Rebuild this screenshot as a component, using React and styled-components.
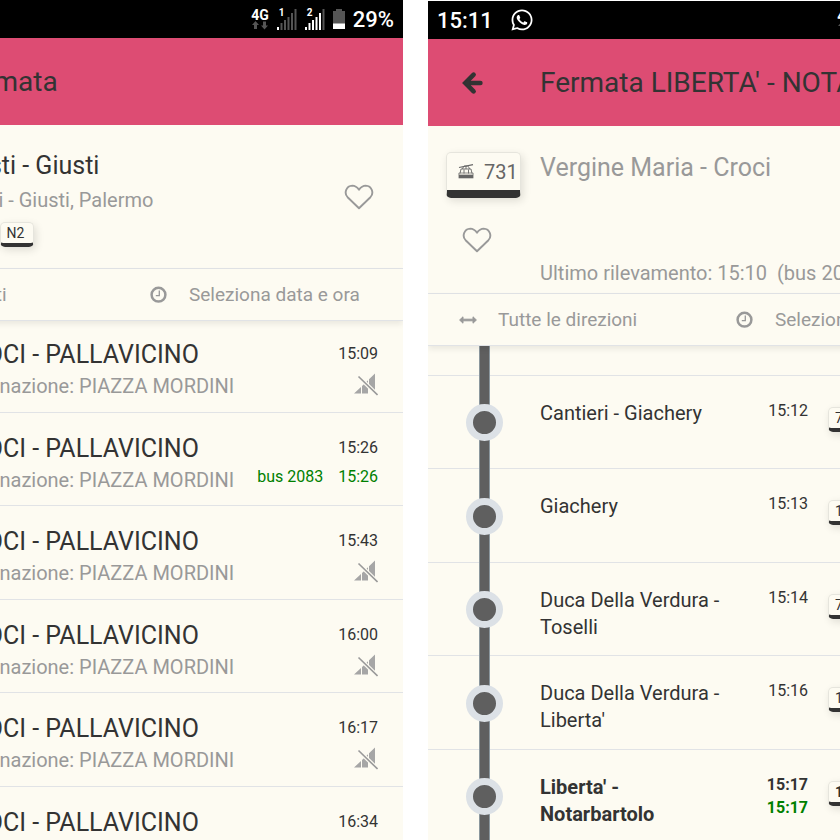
import React from 'react'
import styled, { createGlobalStyle } from 'styled-components'
import { FaWhatsapp } from 'react-icons/fa'

const Palette = {
  pink: '#dd4c73',
  cream: '#fdfbf2',
  dark: '#333333',
  grey: '#999999',
  line: '#e1e3e6',
  rail: '#5f5f5f',
  ring: '#dce1e6',
  green: '#008000',
}

const GlobalStyle = createGlobalStyle`
  * {
    box-sizing: border-box;
  }
  body {
    margin: 0;
    background: #ffffff;
    color: ${Palette.dark};
    font-family: Roboto, "Liberation Sans", sans-serif;
  }
  h1, h2, p, ul {
    margin: 0;
    padding: 0;
    font-weight: 400;
  }
  ul {
    list-style: none;
  }
  button {
    padding: 0;
    border: 0;
    background: none;
    font: inherit;
    color: inherit;
    cursor: pointer;
  }
  svg {
    display: block;
    flex: none;
  }
`

const Page = styled.main`
  display: grid;
  grid-template-columns: minmax(0, 403fr) minmax(0, 412fr);
  gap: 25px;
  height: 100vh;
  overflow: hidden;
`

// each phone is wider than its frame, side picks the edge that stays in view
const Frame = styled.section`
  display: flex;
  justify-content: ${props => props.$side === 'end' ? 'flex-end' : 'flex-start'};
  padding-top: ${props => props.$side === 'end' ? '0' : '1px'};
  overflow: hidden;
`

const Phone = styled.div`
  flex: none;
  width: 561px;
  background: ${Palette.cream};
`

const StatusBar = styled.div`
  display: flex;
  align-items: center;
  justify-content: space-between;
  height: 38px;
  padding: 0 9px;
  background: #000000;
  color: #ffffff;
  font-size: 22px;
  font-weight: 500;
`

const StatusGroup = styled.div`
  display: flex;
  align-items: center;
  gap: ${props => props.$gap};
`

const Network = styled.span`
  display: flex;
  flex-direction: column;
  align-items: center;
  font-size: 14px;
  line-height: 12px;
  font-weight: 700;
`

const Sim = styled.span`
  position: relative;
`

const SimNumber = styled.span`
  position: absolute;
  top: 0;
  left: 2px;
  font-size: 10px;
  line-height: 10px;
  font-weight: 700;
`

const AppBar = styled.header`
  display: flex;
  align-items: center;
  height: 87px;
  background: ${Palette.pink};
`

const BackButton = styled.button`
  flex: none;
  width: 112px;
  padding-left: 33px;
`

const Title = styled.h1`
  font-size: 28px;
  line-height: 32px;
  white-space: nowrap;
`

const StopInfo = styled.div`
  display: flex;
  align-items: center;
  justify-content: space-between;
  height: 144px;
  padding: 0 29px 0 110px;
  border-bottom: 1px solid ${Palette.line};
`

const StopText = styled.div`
  display: flex;
  flex-direction: column;
  gap: 4px;
  padding-top: 4px;
`

const LineInfo = styled.div`
  display: grid;
  grid-template-columns: 94px 1fr;
  column-gap: 18px;
  height: 168px;
  padding-top: 26px;
  border-bottom: 1px solid ${Palette.line};
`

const SideColumn = styled.div`
  display: flex;
  flex-direction: column;
  align-items: flex-start;
  gap: 29px;
  padding-left: 18px;
`

const LineText = styled.div`
  display: flex;
  flex-direction: column;
  justify-content: space-between;
  padding-bottom: 6px;
  color: ${Palette.grey};
`

const HeartButton = styled.button`
  padding: ${props => props.$inset || 0};
`

const Heading = styled.h2`
  font-size: 25px;
  line-height: 32px;
  white-space: nowrap;
`

const Detail = styled.p`
  font-size: 20px;
  line-height: 28px;
  color: ${Palette.grey};
  white-space: pre;
`

const Badges = styled.div`
  display: flex;
  gap: 7px;
  padding-top: 4px;
`

const Badge = styled.span`
  display: inline-flex;
  align-items: center;
  height: 25px;
  padding: 0 9px 0 6px;
  border: 1px solid #e6e5dd;
  border-bottom: 4px solid ${Palette.dark};
  border-radius: 5px;
  box-shadow: 2px 3px 8px rgba(0, 0, 0, 0.12);
  font-size: 14px;
  line-height: 20px;
`

const LineBadge = styled(Badge)`
  gap: 10px;
  width: 75px;
  height: 46px;
  padding: 0 5px 0 11px;
  border-bottom-width: 8px;
  font-size: 20px;
  color: #666666;
`

const Filters = styled.div`
  position: relative;
  z-index: 1;
  display: grid;
  grid-template-columns: 277px 1fr;
  height: 52px;
  background: ${Palette.cream};
  border-bottom: 1px solid ${Palette.line};
  box-shadow: 0 3px 6px rgba(0, 0, 0, 0.08);
`

const FilterButton = styled.button`
  display: flex;
  align-items: center;
  gap: 21px;
  padding-left: 31px;
  font-size: 19px;
  line-height: 24px;
  color: ${Palette.grey};
  white-space: nowrap;
`

const List = styled.ul`
  margin-top: -2px;
`

const Row = styled.li`
  display: flex;
  height: 94px;
  box-shadow: inset 0 -1px ${Palette.line};
  &:nth-child(even) {
    height: 93px;
  }
`

const Departure = styled(Row)`
  justify-content: space-between;
  padding: 20px 25px 0 112px;
`

const DepartureText = styled.div`
  display: flex;
  flex-direction: column;
  gap: 1px;
`

const Times = styled.div`
  display: flex;
  flex-direction: column;
  align-items: flex-end;
  gap: 9px;
  padding-top: 5px;
`

const Time = styled.span`
  font-size: 16px;
  line-height: 20px;
  color: ${props => props.$live ? Palette.green : Palette.dark};
`

const Live = styled.div`
  display: flex;
  gap: 15px;
`

const Stop = styled(Row)`
  padding-left: 51px;
  font-weight: ${props => props.$current ? 700 : 400};
`

const PassedStop = styled(Row)`
  height: 32px;
  padding-left: 51px;
`

const Rail = styled.div`
  display: flex;
  align-items: center;
  justify-content: center;
  flex: none;
  width: 11px;
  background: ${Palette.rail};
  border: solid #8b979e;
  border-width: 0 1px;
`

const Dot = styled.span`
  flex: none;
  width: 37px;
  height: 37px;
  border: 7px solid ${Palette.ring};
  border-radius: 50%;
  background: ${Palette.rail};
`

const StopName = styled.p`
  width: 190px;
  margin-left: 50px;
  padding-top: 24px;
  font-size: 20px;
  line-height: 27px;
  font-weight: inherit;
`

const StopTimes = styled.div`
  display: flex;
  flex-direction: column;
  align-items: flex-end;
  gap: 3px;
  width: 78px;
  padding-top: 25px;
`

const StopLines = styled.div`
  margin-left: 20px;
  padding-top: 31px;
`

const BackIcon = () => (
  <svg width="22" height="24" viewBox="0 0 22 24" fill="none" stroke="#333333">
    <path d="M12.6 3.7L4.3 12l8.300 8.300" strokeWidth="4.600" strokeLinecap="round" />
    <path d="M5 12h14.500" strokeWidth="4.400" strokeLinecap="round" />
    <path d="M3.500 12l5.500-5.500v11z" fill="#333333" />
  </svg>
)

const HeartIcon = () => (
  <svg width="30" height="26" viewBox="0 0 30 26" fill="none" stroke="#999999" strokeWidth="1.900" strokeLinejoin="round">
    <path d="M15 24.300L3.600 13.200C-.2 9.300 2 1.800 8.300 1.600c3.300 0 5 1.700 6.700 4.100 1.700-2.400 3.400-4.100 6.700-4.100 6.300.2 8.500 7.700 4.700 11.600z" />
  </svg>
)

const ClockIcon = () => (
  <svg width="18" height="18" viewBox="0 0 18 18" fill="none" stroke="#999999">
    <circle cx="8.500" cy="8.700" r="6.900" strokeWidth="2.500" />
    <path d="M9.300 4.500v5.200H5.800" strokeWidth="1.300" />
  </svg>
)

const DirectionsIcon = () => (
  <svg width="18" height="10" viewBox="0 0 18 10" fill="#999999" stroke="#999999" strokeWidth="1" strokeLinejoin="round">
    <path d="M.6 5l3.400-3.200v2.400h10V1.800L17.400 5 14 8.200V5.800H4v2.400z" />
  </svg>
)

const NoSignalIcon = () => (
  <svg width="24" height="23" viewBox="0 0 24 23">
    <path d="M0 20.500l7-6.500v6.500zM8 13l6-5.800v13.300H8zM15 6.200L21 .5v20h-6z" fill="#a6a6a6" />
    <path d="M15 15l7 7h-7z" fill="#fdfbf2" />
    <path d="M4.500 3.500l19 18.500" stroke="#fdfbf2" strokeWidth="4" />
    <path d="M4.500 3.500l19 18.500" stroke="#999999" strokeWidth="1.600" />
  </svg>
)

const CableCarIcon = () => (
  <svg width="16" height="15" viewBox="0 0 16 15" fill="none" stroke="#666666">
    <path d="M1 3.500L15 .7" strokeWidth="1.200" />
    <path d="M6 2h4.500M8 2v3M5.500 2.500L4.500 5M10.500 2.500l1 2.500M2 9.500l1-4.500h10l1 4.500M6 5.500v4M10.500 5.500v4" strokeWidth="0.900" />
    <path d="M.9 9h14.200v2H.9z" strokeWidth="0.700" />
    <path d="M.6 11h14.800v3.300H.6z" fill="#666666" stroke="none" />
  </svg>
)

const SignalBars = ({ level }) => (
  <svg width="20" height="22" viewBox="0 0 20 22">
    {[3, 7, 10, 13, 17, 21].map((h, i) =>
      <rect key={i} x={i * 3.500} y={22 - h} width="2" height={h} fill={i < level ? '#ffffff' : '#555555'} />
    )}
  </svg>
)

const DataArrows = () => (
  <svg width="16" height="9" viewBox="0 0 16 9" fill="#555555">
    <path d="M3.500 0L7 4H5v4H2V4H0zM12.500 8.500L9 4.500h2v-4h3v4h2z" />
  </svg>
)

const BatteryIcon = () => (
  <svg width="12" height="20" viewBox="0 0 12 20">
    <path d="M3 0h6v2h3v18H0V2h3z" fill="#555555" />
    <path d="M0 14.500h12V20H0z" fill="#ffffff" />
  </svg>
)

const Status = () => (
  <StatusBar>
    <StatusGroup $gap='17px'>
      <span>15:11</span>
      <FaWhatsapp size={24} />
    </StatusGroup>
    <StatusGroup $gap='8px'>
      <Network>4G<DataArrows /></Network>
      <Sim><SimNumber>1</SimNumber><SignalBars level={1} /></Sim>
      <Sim><SimNumber>2</SimNumber><SignalBars level={5} /></Sim>
      <BatteryIcon />
      <span>29%</span>
    </StatusGroup>
  </StatusBar>
)

const TopBar = ({ title }) => (
  <AppBar>
    <BackButton aria-label='Indietro'><BackIcon /></BackButton>
    <Title>{title}</Title>
  </AppBar>
)

const FilterBar = ({ label }) => (
  <Filters>
    <FilterButton><DirectionsIcon />{label}</FilterButton>
    <FilterButton><ClockIcon />Seleziona data e ora</FilterButton>
  </Filters>
)

const departures = [
  { time: '15:09' },
  { time: '15:26', bus: 'bus 2083', live: '15:26' },
  { time: '15:43' },
  { time: '16:00' },
  { time: '16:17' },
  { time: '16:34' },
]

const stops = [
  { name: 'Cantieri - Giachery', time: '15:12', line: '731' },
  { name: 'Giachery', time: '15:13', line: '101' },
  { name: 'Duca Della Verdura - Toselli', time: '15:14', line: '731' },
  { name: "Duca Della Verdura - Liberta'", time: '15:16', line: '101' },
  { name: "Liberta' - Notarbartolo", time: '15:17', live: '15:17', line: '101', current: true },
]

const StopScreen = () => (
  <Phone>
    <Status />
    <TopBar title='Fermata' />
    <StopInfo>
      <StopText>
        <Heading>Giusti - Giusti</Heading>
        <Detail>Giusti - Giusti, Palermo</Detail>
        <Badges>
          <Badge>731</Badge>
          <Badge>N2</Badge>
        </Badges>
      </StopText>
      <HeartButton aria-label='Preferiti'><HeartIcon /></HeartButton>
    </StopInfo>
    <FilterBar label='Tutti i punti' />
    <List>
      {departures.map((item, index) =>
        <Departure key={index}>
          <DepartureText>
            <Heading>CROCI - PALLAVICINO</Heading>
            <Detail>Destinazione: PIAZZA MORDINI</Detail>
          </DepartureText>
          <Times>
            <Time>{item.time}</Time>
            {item.live
              ? <Live><Time $live>{item.bus}</Time><Time $live>{item.live}</Time></Live>
              : <NoSignalIcon />}
          </Times>
        </Departure>
      )}
    </List>
  </Phone>
)

const LineScreen = () => (
  <Phone>
    <Status />
    <TopBar title="Fermata LIBERTA' - NOTARBARTOLO" />
    <LineInfo>
      <SideColumn>
        <LineBadge><CableCarIcon />731</LineBadge>
        <HeartButton $inset='0 16px' aria-label='Preferiti'><HeartIcon /></HeartButton>
      </SideColumn>
      <LineText>
        <Heading>Vergine Maria - Croci</Heading>
        <Detail>{'Ultimo rilevamento: 15:10  (bus 2083)'}</Detail>
      </LineText>
    </LineInfo>
    <FilterBar label='Tutte le direzioni' />
    <List>
      <PassedStop><Rail /></PassedStop>
      {stops.map((item, index) =>
        <Stop key={index} $current={item.current}>
          <Rail><Dot /></Rail>
          <StopName>{item.name}</StopName>
          <StopTimes>
            <Time>{item.time}</Time>
            {item.live && <Time $live>{item.live}</Time>}
          </StopTimes>
          <StopLines><Badge>{item.line}</Badge></StopLines>
        </Stop>
      )}
    </List>
  </Phone>
)

const App = () => (
  <>
    <GlobalStyle />
    <Page>
      <Frame $side='end'><StopScreen /></Frame>
      <Frame $side='start'><LineScreen /></Frame>
    </Page>
  </>
)

export default App
